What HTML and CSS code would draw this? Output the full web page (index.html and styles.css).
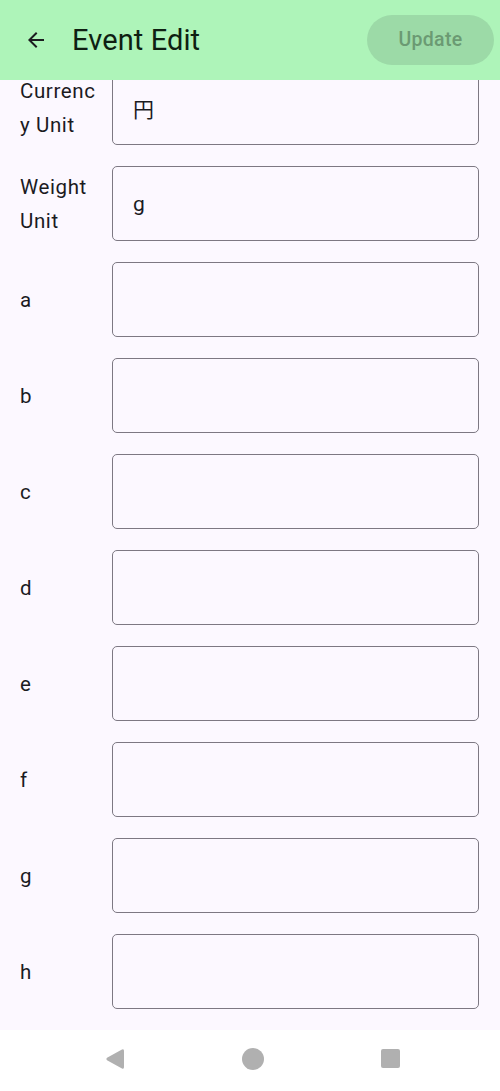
FILE: index.html
```html
<!DOCTYPE html>
<html>
<head>
<meta charset="utf-8">
<link rel="stylesheet" href="styles.css">
</head>
<body>
<div class="screen">
  <header class="appbar">
    <svg class="back" width="24" height="24" viewBox="0 0 24 24"><path d="M20 11H7.83l5.59-5.59L12 4l-8 8 8 8 1.41-1.41L7.83 13H20v-2z" fill="#1b1b1f"/></svg>
    <h1 class="title">Event Edit</h1>
    <button class="update">Update</button>
  </header>
  <main class="list">
    <div class="row"><div class="label">Currenc y Unit</div><div class="field">円</div></div>
    <div class="row"><div class="label">Weight Unit</div><div class="field">g</div></div>
    <div class="row"><div class="label">a</div><div class="field"></div></div>
    <div class="row"><div class="label">b</div><div class="field"></div></div>
    <div class="row"><div class="label">c</div><div class="field"></div></div>
    <div class="row"><div class="label">d</div><div class="field"></div></div>
    <div class="row"><div class="label">e</div><div class="field"></div></div>
    <div class="row"><div class="label">f</div><div class="field"></div></div>
    <div class="row"><div class="label">g</div><div class="field"></div></div>
    <div class="row"><div class="label">h</div><div class="field"></div></div>
  </main>
  <nav class="navbar">
    <svg width="20" height="22" viewBox="0 0 20 22" class="nav-back"><path d="M17 1.5 Q19 0.5 19 3 V19 Q19 21.5 17 20.5 L2 12.3 Q0.5 11 2 9.7 Z" fill="#b0b0b0"/></svg>
    <span class="nav-home"></span>
    <span class="nav-recent"></span>
  </nav>
</div>
</body>
</html>
```

FILE: styles.css
```css
* { box-sizing: border-box; }
html, body { margin: 0; padding: 0; }
body {
  font-family: Roboto, "Noto Sans CJK JP", sans-serif;
  color: #1b1b1f;
  background: #fcf8ff;
}
.screen {
  width: 500px;
  height: 1091px;
  display: flex;
  flex-direction: column;
  overflow: hidden;
}
.appbar {
  height: 80px;
  flex: none;
  background: #aef4b9;
  display: flex;
  align-items: center;
  padding: 0 6px 0 24px;
  position: relative;
  z-index: 1;
}
.back { width: 24px; height: 24px; flex: none; }
.title {
  margin: 0 0 0 24px;
  font-size: 29px;
  font-weight: 400;
  color: #0f1f12;
  flex: 1;
  letter-spacing: 0.1px;
}
.update {
  width: 127px;
  height: 50px;
  border: none;
  border-radius: 25px;
  background: #9cdaa7;
  color: #6b9a73;
  font-family: Roboto, sans-serif;
  font-size: 19.5px;
  font-weight: 500;
  letter-spacing: 0.3px;
  margin-top: -1px;
}
.list {
  flex: 1;
  min-height: 0;
  overflow: hidden;
  display: flex;
  flex-direction: column;
  justify-content: flex-end;
  gap: 21px;
  padding: 0 21px 21px 20px;
}
.row {
  flex: none;
  display: flex;
  align-items: center;
  gap: 8px;
}
.label {
  width: 84px;
  flex: none;
  font-size: 20.5px;
  line-height: 34px;
  letter-spacing: 0.6px;
  color: #1b1b1f;
  word-break: break-all;
}
.field {
  flex: 1;
  height: 75px;
  border: 1.3px solid #7d7883;
  border-radius: 5px;
  display: flex;
  align-items: center;
  padding: 0 20px;
  font-size: 21px;
  letter-spacing: 0.4px;
  color: #1b1b1f;
}
.navbar {
  height: 61px;
  flex: none;
  background: #ffffff;
  display: flex;
  align-items: center;
  position: relative;
}
.nav-back { position: absolute; left: 105px; top: 18px; }
.nav-home {
  position: absolute;
  left: 242px; top: 18px;
  width: 22px; height: 22px;
  border-radius: 50%;
  background: #b0b0b0;
}
.nav-recent {
  position: absolute;
  left: 381px; top: 19px;
  width: 19px; height: 19px;
  border-radius: 2px;
  background: #b0b0b0;
}
```
